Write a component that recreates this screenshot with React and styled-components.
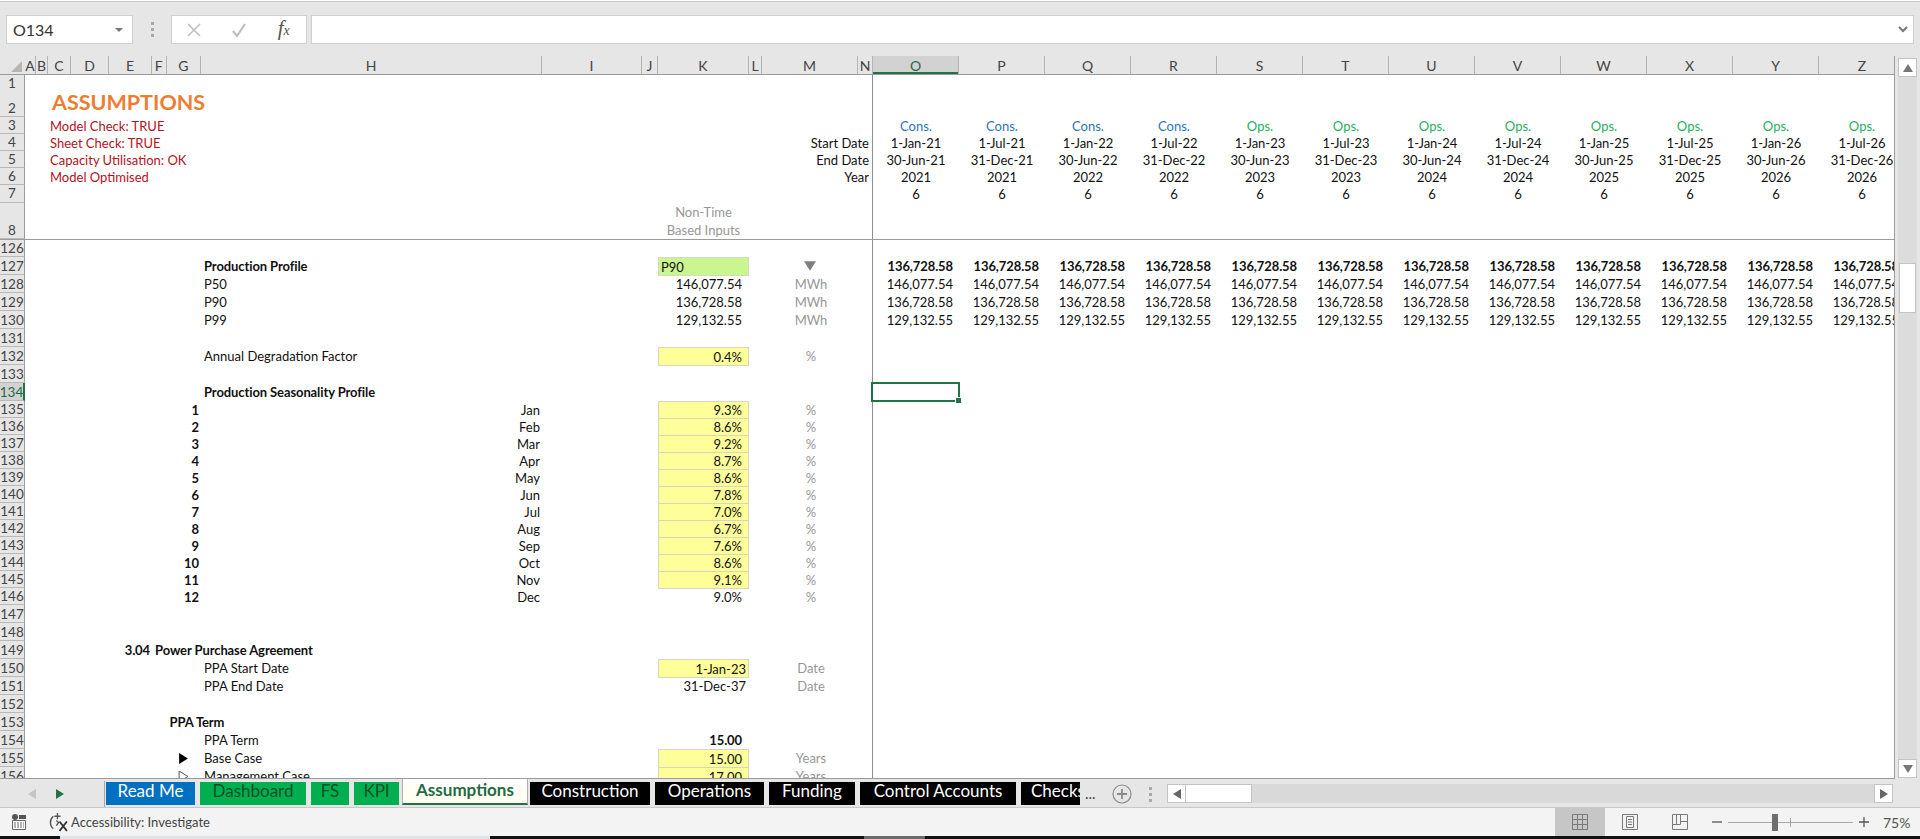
import React from "react"
import styled, { createGlobalStyle } from "styled-components"

const GlobalStyle = createGlobalStyle`
  html, body { margin: 0; padding: 0; background: #e6e6e6; }
  * { box-sizing: border-box; }
`

const COLUMNS = "25px 11px 12px 23px 38px 43px 14.5px 34.5px 341px 100px 16px 91px 13px 96px 15px repeat(12, 86px)"
const LETTERS = "ABCDEFGHIJKLMNOPQRSTUVWXYZ"
const TIME_COLS = "OPQRSTUVWXYZ".split("")
const colIndex = (letter) => LETTERS.indexOf(letter) + 2

const Page = styled.div`
  width: 1920px;
  height: 839px;
  display: flex;
  flex-direction: column;
  overflow: hidden;
  font-family: Lato, "Liberation Sans", sans-serif;
  font-size: 13px;
  color: #111;
`

/* formula bar */
const FormulaBar = styled.div`
  height: 56px;
  flex: none;
  display: flex;
  align-items: flex-start;
  padding: 14px 6px 0 6px;
  background: #e6e6e6;
  border-top: 1px solid #fff;
  box-shadow: inset 0 1px 0 #c9c9c9;
`
const NameBox = styled.div`
  width: 127px;
  height: 29px;
  display: flex;
  align-items: center;
  justify-content: space-between;
  padding: 0 9px 0 6px;
  background: #fff;
  border: 1px solid #cfcfcf;
  font-size: 16px;
  color: #333;
`
const Caret = styled.span`
  width: 0;
  height: 0;
  border-left: 4px solid transparent;
  border-right: 4px solid transparent;
  border-top: 4px solid #777;
`
const Dots = styled.div`
  display: flex;
  flex-direction: column;
  gap: 3px;
  flex: none;
  margin: ${(p) => p.$margin};
  & > i { width: 3px; height: 3px; background: #a8a8a8; display: block; }
`
const ActionBox = styled.div`
  width: 136px;
  height: 29px;
  display: flex;
  align-items: center;
  background: #fff;
  border: 1px solid #cfcfcf;
`
const ActionSlot = styled.span`
  width: 45px;
  display: flex;
  justify-content: center;
`
const FxLabel = styled.span`
  font-family: "Liberation Serif", serif;
  font-style: italic;
  font-size: 21px;
  color: #555;
  line-height: 1;
  margin-top: -2px;
  & > small { font-size: 14px; }
`
const FormulaInput = styled.div`
  flex: 1;
  height: 29px;
  margin-left: 4px;
  display: flex;
  align-items: center;
  justify-content: flex-end;
  padding-right: 5px;
  background: #fff;
  border: 1px solid #cfcfcf;
`

/* sheet */
const Workspace = styled.div`
  flex: 1;
  min-height: 0;
  display: flex;
  background: #e6e6e6;
`
const Pane = styled.div`
  width: 1895px;
  flex: none;
  overflow: hidden;
  border-right: 1px solid #9b9b9b;
  border-bottom: 1px solid #9b9b9b;
`
const HeaderRow = styled.div`
  display: grid;
  grid-template-columns: ${COLUMNS};
  height: 19px;
  background: #e6e6e6;
  border-bottom: 1px solid #9b9b9b;
`
const Corner = styled.div`
  display: flex;
  align-items: flex-end;
  justify-content: flex-end;
  padding: 0 3px 2px 0;
`
const ColHead = styled.div`
  display: flex;
  align-items: center;
  justify-content: center;
  border-right: 1px solid #b4b4b4;
  font-size: 14px;
  color: ${(p) => (p.$active ? "#1f6b45" : "#444")};
  background: ${(p) => (p.$active ? "#d2d2d2" : "transparent")};
  box-shadow: ${(p) => (p.$active ? "inset 0 -2px 0 #217346" : "none")};
  &:last-child { border-right: none; }
`
const Row = styled.div`
  display: grid;
  grid-template-columns: ${COLUMNS};
  height: ${(p) => p.$h}px;
  background: #fff;
  border-bottom: ${(p) => (p.$rule ? "1px solid #9b9b9b" : "none")};
`
const RowHead = styled.div`
  grid-column: 1;
  grid-row: 1;
  display: flex;
  align-items: ${(p) => (p.$low ? "flex-end" : "center")};
  justify-content: center;
  background: ${(p) => (p.$active ? "#d2d2d2" : "#e6e6e6")};
  border-bottom: 1px solid #b9b9b9;
  border-right: ${(p) => (p.$active ? "2px solid #217346" : "1px solid #9b9b9b")};
  font-size: 13.5px;
  color: ${(p) => (p.$active ? "#1f6b45" : "#444")};
`
const FreezeLine = styled.div`
  grid-column: ${colIndex("N")};
  grid-row: 1;
  border-right: 1px solid #8f8f8f;
`
const Cell = styled.div`
  grid-column: ${(p) => p.$span || colIndex(p.$col)};
  grid-row: 1;
  display: flex;
  align-items: center;
  justify-content: ${(p) => ({ left: "flex-start", right: "flex-end", center: "center" }[p.$align || "left"])};
  padding: ${(p) => p.$pad || "0 3px"};
  white-space: nowrap;
  min-width: 0;
  font-weight: ${(p) => (p.$bold ? 700 : 400)};
  letter-spacing: ${(p) => (p.$bold ? "-0.1px" : "0")};
  color: ${(p) => p.$color || "#111"};
`
const InputCell = styled(Cell)`
  background: ${(p) => p.$fill || "#ffff99"};
  border: 1px solid #d6d6c2;
  margin-bottom: -1px;
  z-index: 1;
`
const Title = styled(Cell)`
  font-size: 21.5px;
  font-weight: 700;
  letter-spacing: 0;
  color: #ed7d31;
  padding: 0 0 2px 4px;
`
const SelectedCell = styled.div`
  grid-column: ${colIndex("O")};
  grid-row: 1;
  margin: -1px -1px -1px -2px;
  border: 2px solid #217346;
  position: relative;
  z-index: 2;
  &::after {
    content: "";
    position: absolute;
    right: -3px;
    bottom: -3px;
    width: 5px;
    height: 5px;
    background: #217346;
    border: 1px solid #fff;
    border-width: 1px 0 0 1px;
  }
`
const TwoLine = styled(Cell)`
  flex-direction: column;
  line-height: 18px;
`

/* vertical scrollbar */
const VScroll = styled.div`
  flex: 1;
  display: flex;
  flex-direction: column;
  padding: 2px 3px 1px 3px;
`
const VTrack = styled.div`
  flex: 1;
  background: #dcdcdc;
  display: flex;
  flex-direction: column;
  padding-top: 186px;
`
const VThumb = styled.div`
  height: 50px;
  margin: 0 1px;
  background: #fff;
  border: 1px solid #c4c4c4;
`
const ScrollButton = styled.div`
  flex: none;
  width: ${(p) => p.$w || 19}px;
  height: ${(p) => p.$h || 19}px;
  display: flex;
  align-items: center;
  justify-content: center;
  background: #fff;
  border: 1px solid #c4c4c4;
`

/* tabs */
const TabStrip = styled.div`
  height: 29px;
  flex: none;
  display: flex;
  align-items: flex-start;
  background: #e6e6e6;
  border-bottom: 1px solid #c8c8c8;
`
const TabNav = styled.div`
  width: 105px;
  height: 26px;
  margin-top: 2px;
  flex: none;
  display: flex;
  align-items: center;
  padding-left: 27px;
  gap: 18px;
  border-right: 1px solid #a8a8a8;
`
const TabList = styled.div`
  display: flex;
  gap: 5px;
  padding: 3px 0 0 1px;
  width: 973px;
  flex: none;
`
const Tab = styled.div`
  width: ${(p) => p.$w}px;
  height: 23px;
  flex: none;
  display: flex;
  align-items: flex-start;
  justify-content: ${(p) => (p.$clip ? "flex-start" : "center")};
  padding-left: ${(p) => (p.$clip ? "10px" : "0")};
  overflow: hidden;
  white-space: nowrap;
  font-size: 17px;
  line-height: 18px;
  background: ${(p) => p.$bg};
  color: ${(p) => p.$fg};
`
const ActiveTab = styled.div`
  width: 126px;
  height: 26px;
  margin: -3px -3px 0 -2px;
  flex: none;
  display: flex;
  align-items: center;
  justify-content: center;
  padding-bottom: 3px;
  white-space: nowrap;
  font-size: 17px;
  line-height: 18px;
  font-weight: 700;
  color: #1f6b45;
  background: linear-gradient(#ffffff, #fffff0);
  border: 1px solid #b0b0b0;
  border-top: none;
  border-bottom: 2px solid #217346;
`
const More = styled.span`
  width: 34px;
  margin-top: 5px;
  padding-left: 7px;
  flex: none;
  font-size: 15px;
  color: #444;
`
const PlusSlot = styled.span`
  width: 20px;
  margin-top: 5px;
  flex: none;
  display: flex;
`
const HScroll = styled.div`
  flex: 1;
  display: flex;
  height: 19px;
  margin: 5px 27px 0 0;
  background: #d9d9d9;
`
const HThumb = styled.div`
  width: 66px;
  background: #fff;
  border: 1px solid #c4c4c4;
  border-left: none;
  margin-right: auto;
`

/* status bar */
const StatusBar = styled.div`
  height: 28px;
  flex: none;
  display: flex;
  align-items: center;
  background: #f3f3f3;
  padding-left: 11px;
  font-size: 13px;
  color: #444;
`
const A11y = styled.span`
  display: flex;
  align-items: center;
  margin-left: 21px;
  gap: 2px;
  margin-right: auto;
`
const ViewButton = styled.span`
  width: ${(p) => p.$w || 50}px;
  height: 28px;
  display: flex;
  align-items: center;
  justify-content: center;
  background: ${(p) => (p.$active ? "#c6c6c6" : "transparent")};
`
const ZoomControl = styled.span`
  display: flex;
  align-items: center;
  margin-left: 7px;
  gap: 6px;
  width: 208px;
`
const ZoomTrack = styled.span`
  width: 125px;
  height: 1px;
  background: #a8a8a8;
  position: relative;
  flex: none;
`
const ZoomThumb = styled.span`
  position: absolute;
  left: 44px;
  top: -8px;
  width: 6px;
  height: 17px;
  background: #6e6e6e;
`
const ZoomTick = styled.span`
  position: absolute;
  left: 62px;
  top: -4px;
  width: 1px;
  height: 9px;
  background: #a8a8a8;
`
const ZoomLabel = styled.span`
  margin-left: 8px;
  font-size: 14px;
  color: #555;
`
const Taskbar = styled.div`
  height: 3px;
  flex: none;
  display: flex;
  background: #111;
`
const TaskSegment = styled.div`
  width: ${(p) => p.$w}px;
  background: ${(p) => p.$bg};
`

/* icons */
const Triangle = ({ dir = "up", size = 10, color = "#777", outline }) => {
  const points = {
    up: "5,1 10,9 0,9",
    down: "0,1 10,1 5,9",
    left: "9,0 9,10 1,5",
    right: "1,0 9,5 1,10",
  }[dir]
  return (
    <svg width={size} height={size} viewBox="0 0 10 10">
      <polygon points={points} fill={outline ? "#fff" : color} stroke={outline ? color : "none"} strokeWidth="0.9" />
    </svg>
  )
}

const GridIcon = () => (
  <svg width="18" height="18" viewBox="0 0 18 18" fill="none" stroke="#7a7a7a">
    <path d="M1.5 1.5h15v15h-15zM6.5 1.5v15M11.5 1.5v15M1.5 6.5h15M1.5 11.5h15" />
  </svg>
)
const PageIcon = () => (
  <svg width="18" height="18" viewBox="0 0 18 18" fill="none" stroke="#7a7a7a">
    <path d="M1.5 1.5h15v15h-15zM5.5 3.5h7v11h-7zM7 6.5h4M7 9h4M7 11.5h4" />
  </svg>
)
const BreakIcon = () => (
  <svg width="18" height="18" viewBox="0 0 18 18" fill="none" stroke="#7a7a7a">
    <path d="M1.5 1.5h15v15h-15zM1.5 11.5h8v-10M5.5 1.5v10M9.5 8.5h7" />
  </svg>
)
const MacroIcon = () => (
  <svg width="16" height="18" viewBox="0 0 16 18">
    <rect x="1" y="1" width="6" height="6" rx="3" fill="#555" />
    <rect x="8" y="2" width="7" height="4" fill="#555" />
    <path d="M1.5 7.5h13v9h-13z" fill="#fff" stroke="#666" />
    <path d="M3 10h10M3 12h10M3 14h10" stroke="#666" strokeDasharray="2 1" />
  </svg>
)
const AccessibilityIcon = () => (
  <svg width="21" height="21" viewBox="0 0 20 20" fill="none" stroke="#555" strokeWidth="1.3">
    <path d="M5 4a8 8 0 0 0 0 12" />
    <path d="M9 1v6M6 4h6" />
    <path d="M8 8l2 2-2 3" />
    <path d="M11 9l7 9M18 9l-7 9" stroke="#333" strokeWidth="1.7" />
  </svg>
)

/* data */
const PERIODS = TIME_COLS.map((col, i) => {
  const year = 21 + Math.floor(i / 2)
  return {
    col,
    phase: i < 4 ? "Cons." : "Ops.",
    start: `${i % 2 ? "1-Jul" : "1-Jan"}-${year}`,
    end: `${i % 2 ? "31-Dec" : "30-Jun"}-${year}`,
    year: 2000 + year,
  }
})
const SEASONS = [
  ["Jan", "9.3%"], ["Feb", "8.6%"], ["Mar", "9.2%"], ["Apr", "8.7%"],
  ["May", "8.6%"], ["Jun", "7.8%"], ["Jul", "7.0%"], ["Aug", "6.7%"],
  ["Sep", "7.6%"], ["Oct", "8.6%"], ["Nov", "9.1%"], ["Dec", "9.0%"],
]
const GREY = "#979797"
const BLUE = "#2e75b6"
const GREEN = "#1fae60"
const RED = "#b3121d"
const DATE_LABEL_SPAN = `${colIndex("M")} / ${colIndex("O")}`

const SheetRow = ({ n, h = 18, low, active, rule, children }) => (
  <Row $h={h} $rule={rule}>
    <RowHead $low={low} $active={active}>{n}</RowHead>
    <FreezeLine />
    {children}
  </Row>
)

const Unit = ({ children }) => (
  <Cell $col="M" $align="center" $color={GREY} $pad="0 0 0 2px">{children}</Cell>
)
const Amount = ({ children, bold, pad = "0 7px 0 0" }) => (
  <Cell $col="K" $align="right" $bold={bold} $pad={pad}>{children}</Cell>
)
const InputAmount = ({ children, pad = "0 6px 0 0" }) => (
  <InputCell $col="K" $align="right" $pad={pad}>{children}</InputCell>
)
const Series = ({ value, bold }) =>
  TIME_COLS.map((col) => (
    <Cell key={col} $col={col} $align="right" $bold={bold} $pad="0 6px 0 0">{value}</Cell>
  ))
const ModelFlag = ({ children }) => (
  <Cell $col="C" $color={RED} $pad="0 0 0 2px">{children}</Cell>
)
const DateLabel = ({ children }) => (
  <Cell $span={DATE_LABEL_SPAN} $align="right" $pad="0 4px 0 0">{children}</Cell>
)

const App = () => {
  return (
    <Page>
      <GlobalStyle />
      <FormulaBar>
        <NameBox>O134<Caret /></NameBox>
        <Dots $margin="7px 17px 0 18px"><i /><i /><i /></Dots>
        <ActionBox>
          <ActionSlot>
            <svg width="16" height="16" viewBox="0 0 16 16" stroke="#bdbdbd" strokeWidth="1.5"><path d="M2 2l12 12M14 2L2 14" /></svg>
          </ActionSlot>
          <ActionSlot>
            <svg width="16" height="16" viewBox="0 0 16 16" fill="none" stroke="#bdbdbd" strokeWidth="2.2"><path d="M2 9l4 5L14 2" /></svg>
          </ActionSlot>
          <ActionSlot><FxLabel>f<small>x</small></FxLabel></ActionSlot>
        </ActionBox>
        <FormulaInput>
          <svg width="10" height="8" viewBox="0 0 10 8" fill="none" stroke="#777" strokeWidth="2"><path d="M1 1l4 4 4-4" /></svg>
        </FormulaInput>
      </FormulaBar>

      <Workspace>
        <Pane>
          <HeaderRow>
            <Corner>
              <svg width="11" height="11" viewBox="0 0 11 11"><polygon points="11,0 11,11 0,11" fill="#b5b5b5" /></svg>
            </Corner>
            {LETTERS.split("").map((c) => <ColHead key={c} $active={c === "O"}>{c}</ColHead>)}
          </HeaderRow>

          <SheetRow n={1} h={13} />
          <SheetRow n={2} h={29} low>
            <Title $col="C">ASSUMPTIONS</Title>
          </SheetRow>
          <SheetRow n={3} h={17}>
            <ModelFlag>Model Check: TRUE</ModelFlag>
            {PERIODS.map((p) => (
              <Cell key={p.col} $col={p.col} $align="center" $color={p.phase === "Ops." ? GREEN : BLUE}>{p.phase}</Cell>
            ))}
          </SheetRow>
          <SheetRow n={4} h={17}>
            <ModelFlag>Sheet Check: TRUE</ModelFlag>
            <DateLabel>Start Date</DateLabel>
            {PERIODS.map((p) => <Cell key={p.col} $col={p.col} $align="center">{p.start}</Cell>)}
          </SheetRow>
          <SheetRow n={5} h={17.3}>
            <ModelFlag>Capacity Utilisation: OK</ModelFlag>
            <DateLabel>End Date</DateLabel>
            {PERIODS.map((p) => <Cell key={p.col} $col={p.col} $align="center">{p.end}</Cell>)}
          </SheetRow>
          <SheetRow n={6} h={17}>
            <ModelFlag>Model Optimised</ModelFlag>
            <DateLabel>Year</DateLabel>
            {PERIODS.map((p) => <Cell key={p.col} $col={p.col} $align="center">{p.year}</Cell>)}
          </SheetRow>
          <SheetRow n={7} h={17.4}>
            {PERIODS.map((p) => <Cell key={p.col} $col={p.col} $align="center">6</Cell>)}
          </SheetRow>
          <SheetRow n={8} h={37.3} low rule>
            <TwoLine $col="K" $align="center" $color={GREY}>
              <span>Non-Time</span>
              <span>Based Inputs</span>
            </TwoLine>
          </SheetRow>

          <SheetRow n={126} h={17.5} />
          <SheetRow n={127}>
            <Cell $col="H" $bold>Production Profile</Cell>
            <InputCell $col="K" $fill="#c9f68f" $pad="0 2px">P90</InputCell>
            <Cell $col="M" $align="center"><Triangle dir="down" size={12} color="#7f7f7f" /></Cell>
            <Series value="136,728.58" bold />
          </SheetRow>
          <SheetRow n={128}>
            <Cell $col="H">P50</Cell>
            <Amount>146,077.54</Amount>
            <Unit>MWh</Unit>
            <Series value="146,077.54" />
          </SheetRow>
          <SheetRow n={129}>
            <Cell $col="H">P90</Cell>
            <Amount>136,728.58</Amount>
            <Unit>MWh</Unit>
            <Series value="136,728.58" />
          </SheetRow>
          <SheetRow n={130}>
            <Cell $col="H">P99</Cell>
            <Amount>129,132.55</Amount>
            <Unit>MWh</Unit>
            <Series value="129,132.55" />
          </SheetRow>
          <SheetRow n={131} />
          <SheetRow n={132}>
            <Cell $col="H">Annual Degradation Factor</Cell>
            <InputAmount>0.4%</InputAmount>
            <Unit>%</Unit>
          </SheetRow>
          <SheetRow n={133} />
          <SheetRow n={134} active>
            <Cell $col="H" $bold>Production Seasonality Profile</Cell>
            <SelectedCell />
          </SheetRow>

          {SEASONS.map(([month, share], i) => (
            <SheetRow key={month} n={135 + i} h={17}>
              <Cell $col="G" $align="right" $bold $pad="0 2px 0 0">{i + 1}</Cell>
              <Cell $col="H" $align="right" $pad="0 2px 0 0">{month}</Cell>
              {i < 11 ? <InputAmount>{share}</InputAmount> : <Amount>{share}</Amount>}
              <Unit>%</Unit>
            </SheetRow>
          ))}

          <SheetRow n={147} />
          <SheetRow n={148} />
          <SheetRow n={149}>
            <Cell $col="E" $align="right" $bold $pad="0 2px 0 0">3.04</Cell>
            <Cell $col="F" $bold>Power Purchase Agreement</Cell>
          </SheetRow>
          <SheetRow n={150}>
            <Cell $col="H">PPA Start Date</Cell>
            <InputAmount pad="0 2px 0 0">1-Jan-23</InputAmount>
            <Unit>Date</Unit>
          </SheetRow>
          <SheetRow n={151}>
            <Cell $col="H">PPA End Date</Cell>
            <Amount pad="0 3px 0 0">31-Dec-37</Amount>
            <Unit>Date</Unit>
          </SheetRow>
          <SheetRow n={152} />
          <SheetRow n={153}>
            <Cell $col="G" $bold>PPA Term</Cell>
          </SheetRow>
          <SheetRow n={154}>
            <Cell $col="H">PPA Term</Cell>
            <Amount bold>15.00</Amount>
          </SheetRow>
          <SheetRow n={155}>
            <Cell $col="G" $align="center"><Triangle dir="right" size={11} color="#000" /></Cell>
            <Cell $col="H">Base Case</Cell>
            <InputAmount>15.00</InputAmount>
            <Unit>Years</Unit>
          </SheetRow>
          <SheetRow n={156}>
            <Cell $col="G" $align="center"><Triangle dir="right" size={11} color="#555" outline /></Cell>
            <Cell $col="H">Management Case</Cell>
            <InputAmount>17.00</InputAmount>
            <Unit>Years</Unit>
          </SheetRow>
        </Pane>

        <VScroll>
          <ScrollButton><Triangle dir="up" size={10} /></ScrollButton>
          <VTrack><VThumb /></VTrack>
          <ScrollButton><Triangle dir="down" size={10} /></ScrollButton>
        </VScroll>
      </Workspace>

      <TabStrip>
        <TabNav>
          <Triangle dir="left" size={10} color="#c4c4c4" />
          <Triangle dir="right" size={10} color="#217346" />
        </TabNav>
        <TabList>
          <Tab $w={89} $bg="#0070c0" $fg="#fff">Read Me</Tab>
          <Tab $w={106} $bg="#00b050" $fg="#0b4f2a">Dashboard</Tab>
          <Tab $w={38} $bg="#00b050" $fg="#0b4f2a">FS</Tab>
          <Tab $w={45} $bg="#00b050" $fg="#0b4f2a">KPI</Tab>
          <ActiveTab>Assumptions</ActiveTab>
          <Tab $w={120} $bg="#000" $fg="#fff">Construction</Tab>
          <Tab $w={109} $bg="#000" $fg="#fff">Operations</Tab>
          <Tab $w={86} $bg="#000" $fg="#fff">Funding</Tab>
          <Tab $w={156} $bg="#000" $fg="#fff">Control Accounts</Tab>
          <Tab $w={59} $bg="#000" $fg="#fff" $clip>Checks</Tab>
        </TabList>
        <More>...</More>
        <PlusSlot>
          <svg width="20" height="20" viewBox="0 0 20 20" fill="none" stroke="#8a8a8a">
            <circle cx="10" cy="10" r="9" strokeWidth="1.2" />
            <path d="M5 10h10M10 5v10" strokeWidth="1.8" />
          </svg>
        </PlusSlot>
        <Dots $margin="8px 15px 0 17px"><i /><i /><i /></Dots>
        <HScroll>
          <ScrollButton $h={19}><Triangle dir="left" size={10} color="#666" /></ScrollButton>
          <HThumb />
          <ScrollButton $h={19}><Triangle dir="right" size={10} color="#666" /></ScrollButton>
        </HScroll>
      </TabStrip>

      <StatusBar>
        <MacroIcon />
        <A11y><AccessibilityIcon />Accessibility: Investigate</A11y>
        <ViewButton $active><GridIcon /></ViewButton>
        <ViewButton><PageIcon /></ViewButton>
        <ViewButton><BreakIcon /></ViewButton>
        <ZoomControl>
          <svg width="10" height="10" viewBox="0 0 10 10" stroke="#555" strokeWidth="1.3"><path d="M0 5h10" /></svg>
          <ZoomTrack><ZoomThumb /><ZoomTick /></ZoomTrack>
          <svg width="10" height="10" viewBox="0 0 10 10" stroke="#555" strokeWidth="1.3"><path d="M0 5h10M5 0v10" /></svg>
          <ZoomLabel>75%</ZoomLabel>
        </ZoomControl>
      </StatusBar>
      <Taskbar>
        <TaskSegment $w={60} $bg="#111" />
        <TaskSegment $w={430} $bg="#dfe3e6" />
        <TaskSegment $w={374} $bg="#111" />
        <TaskSegment $w={61} $bg="#6b6b6b" />
      </Taskbar>
    </Page>
  )
}

export default App
